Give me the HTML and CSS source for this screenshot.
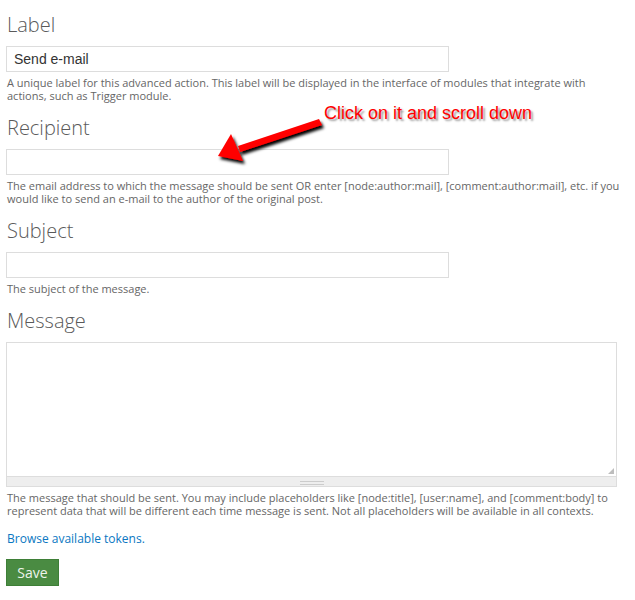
FILE: index.html
```html
<!DOCTYPE html>
<html>
<head>
<meta charset="utf-8">
<link rel="stylesheet" href="styles.css">
</head>
<body>
<form class="form">
  <div class="item">
    <label class="title">Label</label>
    <input class="text" type="text" value="Send e-mail">
    <div class="desc">A unique label for this advanced action. This label will be displayed in the interface of modules that integrate with actions, such as Trigger module.</div>
  </div>
  <div class="item">
    <label class="title">Recipient</label>
    <input class="text" type="text">
    <div class="desc">The email address to which the message should be sent OR enter [node:author:mail], [comment:author:mail], etc. if you would like to send an e-mail to the author of the original post.</div>
  </div>
  <div class="item">
    <label class="title">Subject</label>
    <input class="text" type="text">
    <div class="desc">The subject of the message.</div>
  </div>
  <div class="item">
    <label class="title">Message</label>
    <div class="area-wrap">
      <textarea class="area"></textarea>
      <span class="dots"></span>
      <div class="grippie"><span class="grip"></span></div>
    </div>
    <div class="desc">The message that should be sent. You may include placeholders like [node:title], [user:name], and [comment:body] to represent data that will be different each time message is sent. Not all placeholders will be available in all contexts.</div>
  </div>
  <div class="item">
    <a class="link" href="#">Browse available tokens.</a>
  </div>
  <div class="item">
    <button class="save" type="button">Save</button>
  </div>
</form>
<div class="note">Click on it and scroll down</div>
<svg class="arrow" width="140" height="60" viewBox="0 0 140 60">
  <defs>
    <filter id="sh" x="-20%" y="-40%" width="140%" height="180%">
      <feGaussianBlur in="SourceAlpha" stdDeviation="1.6" result="bl"/>
      <feOffset in="bl" dx="2" dy="3" result="b"/>
      <feMerge><feMergeNode in="b"/><feMergeNode in="SourceGraphic"/></feMerge>
    </filter>
  </defs>
  <g filter="url(#sh)" fill="#f00" stroke="none">
    <polygon points="119,11 122,17 40,44 38,38"/>
    <polygon points="18,48 31,26 43,53"/>
  </g>
</svg>
</body>
</html>
```
FILE: styles.css
```css
html, body {
  margin: 0;
  padding: 0;
  background: #fff;
}
body {
  position: relative;
  width: 635px;
  height: 600px;
  overflow: hidden;
  font-family: "Open Sans", "Liberation Sans", sans-serif;
}
.form {
  padding: 13px 0 0 6px;
}
.item {
  margin-bottom: 14px;
}
.title {
  display: block;
  font-size: 20px;
  font-weight: 300;
  line-height: 24px;
  color: #5a5a5a;
  margin-bottom: 9px;
  margin-left: 1px;
}
.text {
  display: block;
  box-sizing: border-box;
  width: 443px;
  height: 26px;
  margin: 0;
  border: 1px solid #ddd;
  background: #fff;
  padding: 0 7px;
  font-family: "Liberation Sans", sans-serif;
  font-size: 14px;
  color: #333;
  outline: none;
}
.desc {
  margin-top: 4px;
  font-size: 11px;
  line-height: 13px;
  color: #666;
  padding-left: 1px;
  padding-right: 14px;
}
.area-wrap {
  position: relative;
  width: 611px;
}
.area {
  display: block;
  box-sizing: border-box;
  width: 611px;
  height: 135px;
  margin: 0;
  border: 1px solid #ddd;
  resize: none;
  background: #fff;
}
.dots {
  position: absolute;
  right: 3px;
  top: 126px;
  width: 6px;
  height: 6px;
  background-image: radial-gradient(circle, #bbb 0.7px, transparent 0.9px);
  background-size: 2px 2px;
  clip-path: polygon(100% 0, 100% 100%, 0 100%);
}
.grippie {
  box-sizing: border-box;
  height: 10px;
  background: #eee;
  border: 1px solid #ddd;
  border-top: 0;
  display: flex;
  justify-content: center;
  align-items: center;
}
.grip {
  width: 24px;
  height: 4px;
  border-top: 1px solid #ccc;
  border-bottom: 1px solid #ccc;
  box-sizing: border-box;
  position: relative;
  top: 1px;
}
.link {
  display: block;
  font-size: 12px;
  line-height: 13px;
  color: #0a77c2;
  text-decoration: none;
  padding-left: 1px;
  margin-top: 15px;
}
.save {
  display: block;
  margin: 0;
  width: 53px;
  height: 27px;
  border: 1px solid #3e7f37;
  background: #4a8b42;
  color: #eef3ec;
  font-family: "Open Sans", sans-serif;
  font-size: 14px;
  padding: 0;
}
.note {
  position: absolute;
  left: 324px;
  top: 103px;
  font-family: "Liberation Sans", Arial, sans-serif;
  font-size: 18px;
  line-height: 20px;
  color: #f00;
  text-shadow: 2px 2px 2px rgba(0,0,0,0.4);
  white-space: nowrap;
}
.arrow {
  position: absolute;
  left: 200px;
  top: 108px;
}
```
